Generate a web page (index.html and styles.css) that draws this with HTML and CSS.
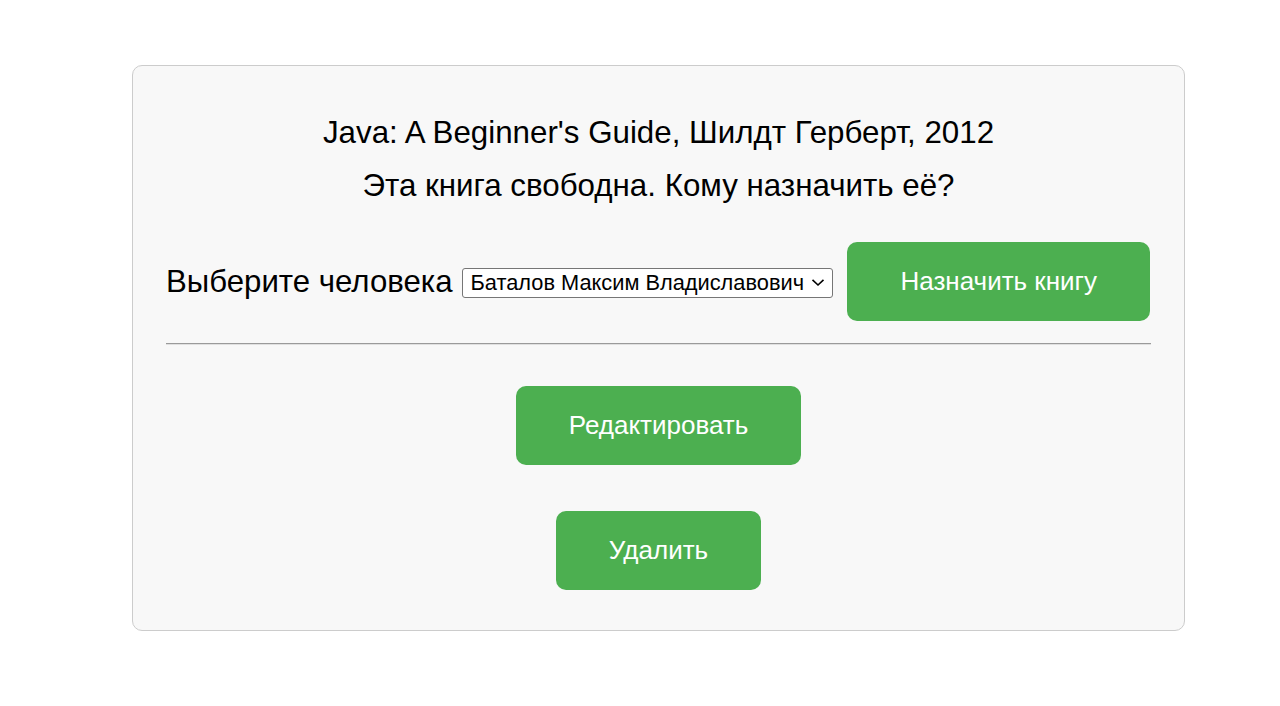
FILE: index.html
```html
<!DOCTYPE html>
<html lang="ru">
<head>
<meta charset="utf-8">
<title>Книга</title>
<link rel="stylesheet" href="styles.css">
</head>
<body>
<div class="card">
  <p class="title">Java: A Beginner's Guide, Шилдт Герберт, 2012</p>
  <p class="status">Эта книга свободна. Кому назначить её?</p>
  <form class="assign">
    <label class="assign-label" for="person">Выберите человека</label>
    <select id="person" class="person-select">
      <option>Баталов Максим Владиславович</option>
    </select>
    <button type="button" class="btn">Назначить книгу</button>
  </form>
  <hr class="divider">
  <div class="actions">
    <button type="button" class="btn">Редактировать</button>
  </div>
  <div class="actions">
    <button type="button" class="btn">Удалить</button>
  </div>
</div>
</body>
</html>
```
FILE: styles.css
```css
html, body {
  margin: 0;
  padding: 0;
  background: #ffffff;
}
body {
  font-family: "Liberation Sans", Arial, sans-serif;
  color: #000;
}
.card {
  box-sizing: border-box;
  margin: 65px 95px 0 132px;
  width: 1053px;
  height: 566px;
  background: #f8f8f8;
  border: 1px solid #cccccc;
  border-radius: 10px;
  padding: 0 33px;
  display: flex;
  flex-direction: column;
}
.title, .status {
  margin: 0;
  text-align: center;
  font-size: 31.3px;
  line-height: 36px;
}
.title {
  margin-top: 49px;
}
.status {
  margin-top: 17px;
}
.assign {
  margin-top: 38px;
  display: flex;
  align-items: center;
}
.assign-label {
  font-size: 31.2px;
  margin-right: 10px;
}
.person-select {
  -webkit-appearance: none;
  appearance: none;
  box-sizing: border-box;
  font-family: "Liberation Sans", Arial, sans-serif;
  font-size: 21.8px;
  width: 371px;
  height: 30px;
  margin: 2px 14px 0 0;
  padding: 0 28px 0 7px;
  color: #000;
  border: 1px solid #767676;
  border-radius: 3px;
  background-color: #fff;
  background-image: url("data:image/svg+xml,%3Csvg xmlns='http://www.w3.org/2000/svg' width='14' height='9' viewBox='0 0 14 9'%3E%3Cpath d='M1.5 1.8 L7 7 L12.5 1.8' fill='none' stroke='%23000' stroke-width='1.6'/%3E%3C/svg%3E");
  background-repeat: no-repeat;
  background-position: right 7px center;
  background-size: 14px 9px;
}
.btn {
  font-family: "Liberation Sans", Arial, sans-serif;
  font-size: 26px;
  color: #fff;
  background: #4caf50;
  border: none;
  border-radius: 10px;
  height: 79px;
  padding: 0 53px;
  cursor: pointer;
}
.divider {
  margin: 22px 0 0;
  border: none;
  border-top: 1px solid #9a9a9a;
  border-bottom: 1px solid #e0e0e0;
  height: 0;
}
.actions {
  display: flex;
  justify-content: center;
}
.divider + .actions {
  margin-top: 41px;
}
.actions + .actions {
  margin-top: 46px;
}
```
